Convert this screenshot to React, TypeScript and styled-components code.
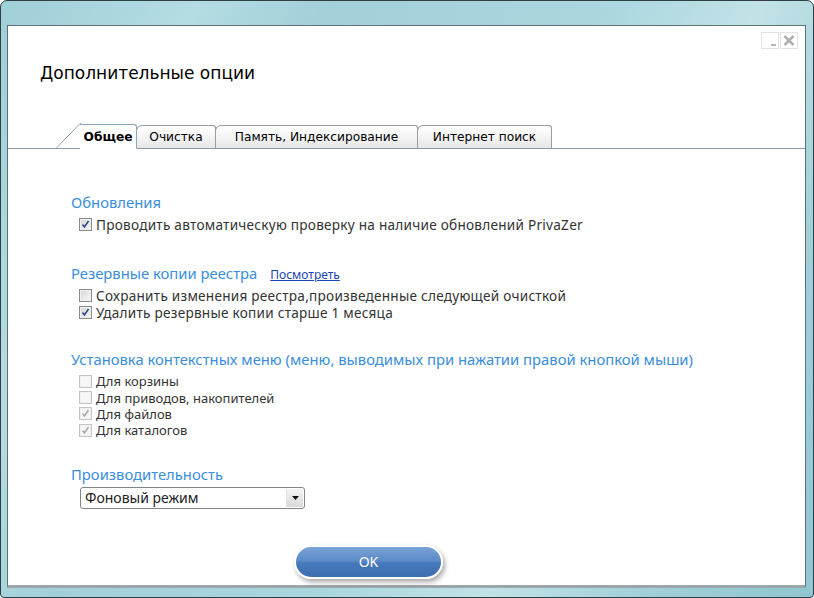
import { FC } from 'react';
import styled, { createGlobalStyle } from 'styled-components';

const GlobalStyle = createGlobalStyle`
  html, body {
    margin: 0;
    padding: 0;
    background: #ffffff;
  }
  * {
    box-sizing: border-box;
  }
`

const Frame = styled.div`
  width: 814px;
  height: 598px;
  padding: 24px 7px 9px 6px;
  border: 1px solid #2f3f45;
  border-radius: 7px 7px 4px 4px;
  background: linear-gradient(115deg, #9fcfd8 0%, #b4dce2 18%, #a2d0d9 30%, #aad6de 55%, #c1e2e7 70%, #a0cfd8 85%, #8fc6d1 100%);
  display: flex;
`

const Client = styled.div`
  flex: 1;
  display: flex;
  flex-direction: column;
  background: #ffffff;
  border: 1px solid #5f6f75;
  border-bottom: 3px solid #9aa6aa;
`

const WinButtons = styled.div`
  display: flex;
  justify-content: flex-end;
  gap: 1px;
  padding: 6px 7px 0 0;
`

const WinButton = styled.div`
  width: 18px;
  height: 17px;
  border: 1px solid #e2e2e2;
  background: #ffffff;
  display: flex;
  align-items: center;
  justify-content: center;
`

const Title = styled.div`
  margin: 13px 0 0 32px;
  font-family: "DejaVu Sans", "Liberation Sans", sans-serif;
  font-size: 17px;
  line-height: 22px;
  color: #000000;
`

const TabStrip = styled.div`
  margin-top: 40px;
  height: 25px;
  display: flex;
  align-items: flex-end;
  padding-left: 72px;
  border-bottom: 1px solid #8e9ba3;
`

const Tab = styled.div<{ $w: number; $active?: boolean }>`
  position: relative;
  width: ${p => p.$w}px;
  height: ${p => (p.$active ? 25 : 24)}px;
  margin-bottom: -1px;
  display: flex;
  align-items: center;
  justify-content: center;
  font-family: "DejaVu Sans", "Liberation Sans", sans-serif;
  font-size: 12.2px;
  font-weight: ${p => (p.$active ? 700 : 400)};
  color: #000000;
  border: 1px solid ${p => (p.$active ? '#8aa6bf' : '#9c9c9c')};
  border-left: ${p => (p.$active ? 'none' : '1px solid #9c9c9c')};
  border-bottom: ${p => (p.$active ? '1px solid #ffffff' : '1px solid #8e9ba3')};
  border-radius: ${p => (p.$active ? '0 3px 0 0' : '6px 3px 0 0')};
  background: ${p => (p.$active ? '#ffffff' : 'linear-gradient(#ffffff 0%, #f4f4f4 50%, #e6e6e6 100%)')};
  margin-left: ${p => (p.$active ? 0 : -1)}px;
  z-index: ${p => (p.$active ? 2 : 1)};
`

const TabSlant = styled.svg`
  position: absolute;
  left: -24px;
  bottom: -1px;
`

const Content = styled.div`
  padding: 43px 0 0 63px;
  display: flex;
  flex-direction: column;
`

const Section = styled.div<{ $gap: number }>`
  margin-top: ${p => p.$gap}px;
  display: flex;
  flex-direction: column;
`

const HeadingRow = styled.div`
  display: flex;
  align-items: baseline;
  gap: 13px;
  margin-bottom: 4px;
`

const Heading = styled.div`
  font-family: "Noto Sans", "Open Sans", sans-serif;
  font-size: 14.8px;
  line-height: 20px;
  color: #3a8edb;
`

const Link = styled.a`
  font-family: "Noto Sans", "Open Sans", sans-serif;
  font-size: 12px;
  color: #1a44b8;
  text-decoration: underline;
  cursor: pointer;
`

const Row = styled.label<{ $h: number; $fs: number }>`
  display: flex;
  align-items: center;
  gap: 4px;
  height: ${p => p.$h}px;
  padding-left: 8px;
  font-family: "Noto Sans", "Open Sans", sans-serif;
  font-size: ${p => p.$fs}px;
  letter-spacing: ${p => (p.$fs > 13 ? 0.25 : 0)}px;
  line-height: ${p => Math.floor(p.$h)}px;
  color: #333333;
`

const Box = styled.span<{ $dim?: boolean }>`
  width: 13px;
  height: 13px;
  border: 1px solid ${p => (p.$dim ? '#c6c6c6' : '#8a8a8a')};
  background: ${p => (p.$dim ? '#f7f7f7' : 'linear-gradient(135deg, #d8d8d8, #f6f6f6)')};
  box-shadow: inset 0 0 0 1px #f0f0f0;
  display: flex;
  align-items: center;
  justify-content: center;
  flex-shrink: 0;
`

const SelectBox = styled.div`
  margin: 3px 0 0 9px;
  width: 225px;
  height: 22px;
  border: 1px solid #7f8589;
  border-radius: 3px;
  display: flex;
  align-items: center;
  justify-content: space-between;
  padding: 0 1px 0 4px;
  font-family: "Noto Sans", "Open Sans", sans-serif;
  font-size: 14px;
  color: #222222;
  background: #ffffff;
`

const SelectArrow = styled.span`
  width: 17px;
  height: 18px;
  background: linear-gradient(#f4f4f4, #d9d9d9);
  border-left: 1px solid #e0e0e0;
  display: flex;
  align-items: center;
  justify-content: center;
`

const Footer = styled.div`
  margin-top: 36px;
  padding-left: 286px;
`

const OkButton = styled.button`
  width: 149px;
  height: 34px;
  border: 2px solid #ffffff;
  border-radius: 17px;
  background: linear-gradient(#7aa3d6 0%, #5b8bc9 45%, #4479bb 55%, #3d6eaf 100%);
  box-shadow: 2px 3px 5px rgba(0, 0, 0, 0.35);
  color: #ffffff;
  font-family: "Noto Sans", "Open Sans", sans-serif;
  font-size: 14px;
  cursor: pointer;
`

const Check: FC<{ dim?: boolean }> = ({ dim }) => (
  <svg width="9" height="9" viewBox="0 0 9 9">
    <path d="M1.5 4.5 L3.5 7 L7.5 1" fill="none" stroke={dim ? '#a9a9a9' : '#2b4a86'} strokeWidth="1.6" />
  </svg>
)

const CheckRow: FC<{ text: string; checked?: boolean; dim?: boolean; h?: number; fs?: number }> = ({
  text,
  checked,
  dim,
  h = 17,
  fs = 13.6,
}) => (
  <Row $h={h} $fs={fs}>
    <Box $dim={dim}>{checked && <Check dim={dim} />}</Box>
    {text}
  </Row>
)

export const App: FC = () => {
  return (
    <Frame>
      <GlobalStyle />
      <Client>
        <WinButtons>
          <WinButton>
            <svg width="16" height="15" viewBox="0 0 16 15">
              <rect x="9" y="11" width="5" height="2" fill="#b5b5b5" />
            </svg>
          </WinButton>
          <WinButton>
            <svg width="12" height="11" viewBox="0 0 12 11">
              <path d="M1.5 1 L10.5 10 M10.5 1 L1.5 10" stroke="#b0b0b0" strokeWidth="2.6" />
            </svg>
          </WinButton>
        </WinButtons>

        <Title>Дополнительные опции</Title>

        <TabStrip>
          <Tab $w={57} $active>
            <TabSlant width="25" height="26" viewBox="0 0 25 26">
              <path d="M0 25.5 L24 0.5 L25 0.5" fill="none" stroke="#8aa6bf" strokeWidth="1" />
            </TabSlant>
            Общее
          </Tab>
          <Tab $w={80}>Очистка</Tab>
          <Tab $w={203}>Память, Индексирование</Tab>
          <Tab $w={135}>Интернет поиск</Tab>
        </TabStrip>

        <Content>
          <Section $gap={0}>
            <HeadingRow>
              <Heading>Обновления</Heading>
            </HeadingRow>
            <CheckRow text="Проводить автоматическую проверку на наличие обновлений PrivaZer" checked />
          </Section>

          <Section $gap={30}>
            <HeadingRow>
              <Heading>Резервные копии реестра</Heading>
              <Link>Посмотреть</Link>
            </HeadingRow>
            <CheckRow text="Сохранить изменения реестра,произведенные следующей очисткой" />
            <CheckRow text="Удалить резервные копии старше 1 месяца" checked />
          </Section>

          <Section $gap={28}>
            <HeadingRow>
              <Heading>Установка контекстных меню (меню, выводимых при нажатии правой кнопкой мыши)</Heading>
            </HeadingRow>
            <CheckRow text="Для корзины" dim h={16.4} fs={13} />
            <CheckRow text="Для приводов, накопителей" dim h={16.4} fs={13} />
            <CheckRow text="Для файлов" checked dim h={16.4} fs={13} />
            <CheckRow text="Для каталогов" checked dim h={16.4} fs={13} />
          </Section>

          <Section $gap={25}>
            <Heading>Производительность</Heading>
            <SelectBox>
              Фоновый режим
              <SelectArrow>
                <svg width="7" height="4" viewBox="0 0 7 4">
                  <path d="M0 0 L7 0 L3.5 4 Z" fill="#111111" />
                </svg>
              </SelectArrow>
            </SelectBox>
          </Section>
        </Content>

        <Footer>
          <OkButton>OK</OkButton>
        </Footer>
      </Client>
    </Frame>
  );
};

export default App;
